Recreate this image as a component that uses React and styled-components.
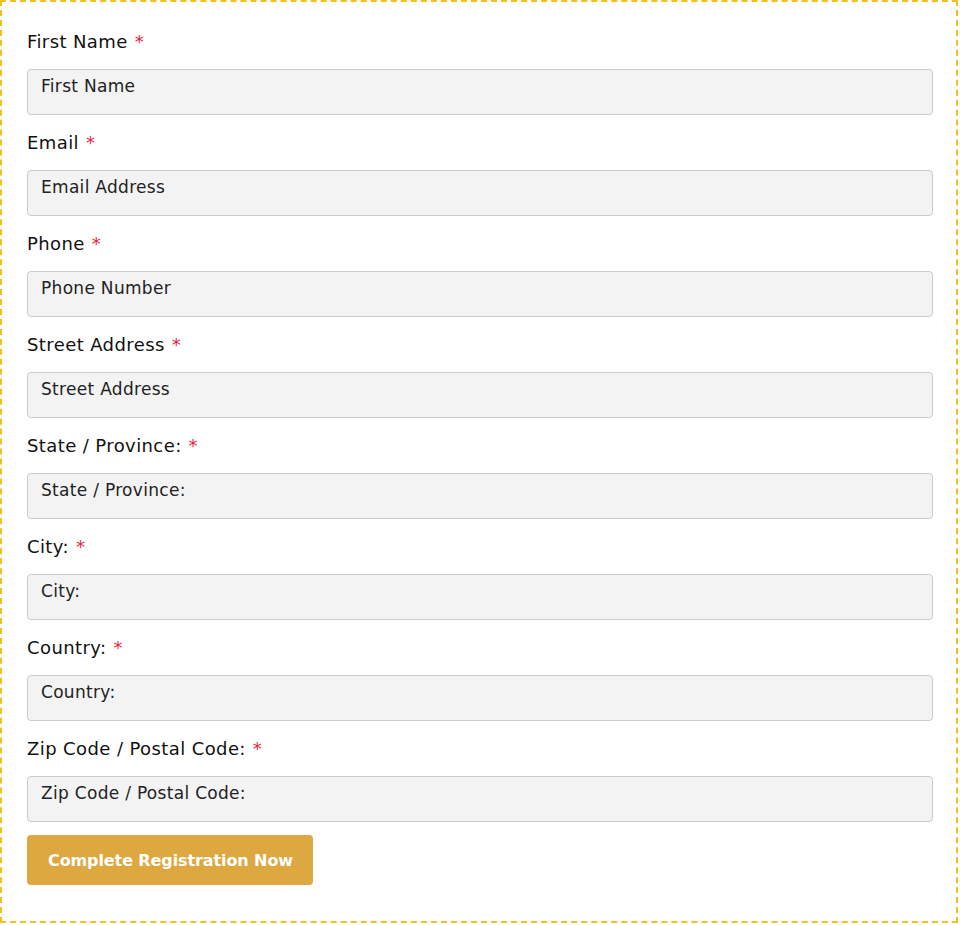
import React from "react";
import styled, { createGlobalStyle } from "styled-components";

const Global = createGlobalStyle`
  html, body { margin: 0; padding: 0; background: #fff; }
  body { font-family: "DejaVu Sans", "Open Sans", sans-serif; }
  * { box-sizing: border-box; }
`;

const Frame = styled.div`
  width: 958px;
  height: 923px;
  border: 2px dashed #f6bf1c;
  padding: 27px 25px 0 25px;
`;

const Form = styled.form`
  display: flex;
  flex-direction: column;
  width: 906px;
`;

const Field = styled.div`
  display: flex;
  flex-direction: column;
  gap: 14px;
  margin-bottom: 15px;
`;

const Label = styled.label`
  font-size: 18px;
  line-height: 26px;
  letter-spacing: 0.4px;
  color: #111;
`;

const Req = styled.span`
  color: #e0283f;
  margin-left: 7px;
`;

const Input = styled.input`
  width: 100%;
  height: 46px;
  padding: 5px 13px 17px;
  font-family: inherit;
  font-size: 17px;
  letter-spacing: 0.3px;
  background: #f3f3f3;
  border: 1px solid #c9cbd2;
  border-radius: 4px;
  outline: none;
  &::placeholder { color: #222; opacity: 1; }
`;

const Button = styled.button`
  align-self: flex-start;
  margin-top: -2px;
  height: 50px;
  padding: 0 20px 0 21px;
  background: #dda840;
  color: #fff;
  border: none;
  border-radius: 4px;
  font-family: inherit;
  font-size: 16px;
  font-weight: 700;
  letter-spacing: -0.1px;
  cursor: pointer;
`;

const fields = [
  ["First Name", "First Name"],
  ["Email", "Email Address"],
  ["Phone", "Phone Number"],
  ["Street Address", "Street Address"],
  ["State / Province:", "State / Province:"],
  ["City:", "City:"],
  ["Country:", "Country:"],
  ["Zip Code / Postal Code:", "Zip Code / Postal Code:"],
];

export default function App() {
  return (
    <>
      <Global />
      <Frame>
        <Form onSubmit={(e) => e.preventDefault()}>
          {fields.map(([label, ph]) => (
            <Field key={label}>
              <Label>
                {label}
                <Req>*</Req>
              </Label>
              <Input placeholder={ph} />
            </Field>
          ))}
          <Button type="submit">Complete Registration Now</Button>
        </Form>
      </Frame>
    </>
  );
}
